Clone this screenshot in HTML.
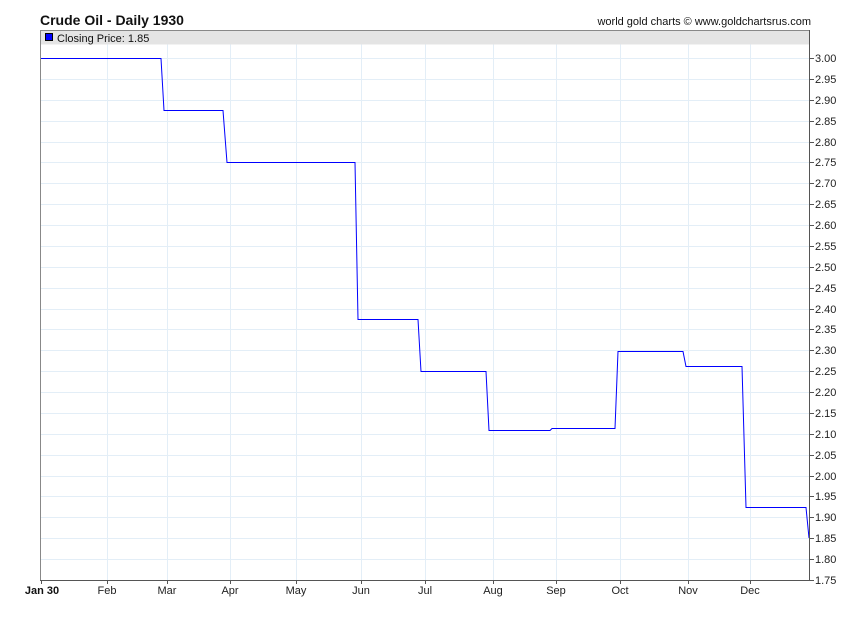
<!DOCTYPE html>
<html><head><style>
body{margin:0;background:#fff;font-family:"Liberation Sans",Arial,sans-serif;}
svg text{font-family:"Liberation Sans",Arial,sans-serif;}
</style></head><body>
<svg width="850" height="616" viewBox="0 0 850 616" xmlns="http://www.w3.org/2000/svg">
<rect width="850" height="616" fill="#fff"/>
<text x="40" y="25" font-size="14" font-weight="bold" fill="#111">Crude Oil - Daily 1930</text>
<text x="811" y="25" font-size="11" fill="#111" text-anchor="end">world gold charts © www.goldchartsrus.com</text>
<g stroke="#e3eef7" stroke-width="1">
<g id="h"></g>
</g>
<g stroke="#e3eef7" stroke-width="1" id="grid">
<line x1="40" x2="810" y1="58.5" y2="58.5"/><line x1="40" x2="810" y1="79.5" y2="79.5"/><line x1="40" x2="810" y1="100.5" y2="100.5"/><line x1="40" x2="810" y1="121.5" y2="121.5"/><line x1="40" x2="810" y1="142.5" y2="142.5"/><line x1="40" x2="810" y1="162.5" y2="162.5"/><line x1="40" x2="810" y1="183.5" y2="183.5"/><line x1="40" x2="810" y1="204.5" y2="204.5"/><line x1="40" x2="810" y1="225.5" y2="225.5"/><line x1="40" x2="810" y1="246.5" y2="246.5"/><line x1="40" x2="810" y1="267.5" y2="267.5"/><line x1="40" x2="810" y1="288.5" y2="288.5"/><line x1="40" x2="810" y1="309.5" y2="309.5"/><line x1="40" x2="810" y1="329.5" y2="329.5"/><line x1="40" x2="810" y1="350.5" y2="350.5"/><line x1="40" x2="810" y1="371.5" y2="371.5"/><line x1="40" x2="810" y1="392.5" y2="392.5"/><line x1="40" x2="810" y1="413.5" y2="413.5"/><line x1="40" x2="810" y1="434.5" y2="434.5"/><line x1="40" x2="810" y1="455.5" y2="455.5"/><line x1="40" x2="810" y1="476.5" y2="476.5"/><line x1="40" x2="810" y1="496.5" y2="496.5"/><line x1="40" x2="810" y1="517.5" y2="517.5"/><line x1="40" x2="810" y1="538.5" y2="538.5"/><line x1="40" x2="810" y1="559.5" y2="559.5"/>
<line x1="107.5" x2="107.5" y1="30" y2="580"/><line x1="167.5" x2="167.5" y1="30" y2="580"/><line x1="230.5" x2="230.5" y1="30" y2="580"/><line x1="296.5" x2="296.5" y1="30" y2="580"/><line x1="361.5" x2="361.5" y1="30" y2="580"/><line x1="425.5" x2="425.5" y1="30" y2="580"/><line x1="493.5" x2="493.5" y1="30" y2="580"/><line x1="556.5" x2="556.5" y1="30" y2="580"/><line x1="620.5" x2="620.5" y1="30" y2="580"/><line x1="688.5" x2="688.5" y1="30" y2="580"/><line x1="750.5" x2="750.5" y1="30" y2="580"/>
</g>
<rect x="40.5" y="30.5" width="769" height="14" fill="#e4e4e4"/>
<rect x="45.5" y="33.5" width="7" height="7" fill="#0000ff" stroke="#000" stroke-width="1"/>
<text x="57" y="42" font-size="11" fill="#111">Closing Price: 1.85</text>
<polyline fill="none" stroke="#0000ff" stroke-width="1" points="40,58.5 161,58.5 164,110.5 223,110.5 227,162.5 355,162.5 358,319.5 418,319.5 421,371.5 486,371.5 489,430.5 550,430.5 552,428.5 615,428.5 618,351.5 683,351.5 686,366.5 742,366.5 746,507.5 806,507.5 809,538"/>
<path d="M40.5 30.5 H809.5 V580.5 H40.5 Z" fill="none" stroke="#888" stroke-width="1"/>
<g stroke="#555" stroke-width="1">
<line x1="809.5" y1="30" x2="809.5" y2="581"/>
<line x1="40" y1="580.5" x2="810" y2="580.5"/>
</g>
<g stroke="#555" stroke-width="1" id="ticks">
<line x1="810" x2="814" y1="58.5" y2="58.5"/><line x1="810" x2="814" y1="79.5" y2="79.5"/><line x1="810" x2="814" y1="100.5" y2="100.5"/><line x1="810" x2="814" y1="121.5" y2="121.5"/><line x1="810" x2="814" y1="142.5" y2="142.5"/><line x1="810" x2="814" y1="162.5" y2="162.5"/><line x1="810" x2="814" y1="183.5" y2="183.5"/><line x1="810" x2="814" y1="204.5" y2="204.5"/><line x1="810" x2="814" y1="225.5" y2="225.5"/><line x1="810" x2="814" y1="246.5" y2="246.5"/><line x1="810" x2="814" y1="267.5" y2="267.5"/><line x1="810" x2="814" y1="288.5" y2="288.5"/><line x1="810" x2="814" y1="309.5" y2="309.5"/><line x1="810" x2="814" y1="329.5" y2="329.5"/><line x1="810" x2="814" y1="350.5" y2="350.5"/><line x1="810" x2="814" y1="371.5" y2="371.5"/><line x1="810" x2="814" y1="392.5" y2="392.5"/><line x1="810" x2="814" y1="413.5" y2="413.5"/><line x1="810" x2="814" y1="434.5" y2="434.5"/><line x1="810" x2="814" y1="455.5" y2="455.5"/><line x1="810" x2="814" y1="476.5" y2="476.5"/><line x1="810" x2="814" y1="496.5" y2="496.5"/><line x1="810" x2="814" y1="517.5" y2="517.5"/><line x1="810" x2="814" y1="538.5" y2="538.5"/><line x1="810" x2="814" y1="559.5" y2="559.5"/><line x1="810" x2="814" y1="580.5" y2="580.5"/>
<line x1="41.5" x2="41.5" y1="580" y2="584"/><line x1="107.5" x2="107.5" y1="580" y2="584"/><line x1="167.5" x2="167.5" y1="580" y2="584"/><line x1="230.5" x2="230.5" y1="580" y2="584"/><line x1="296.5" x2="296.5" y1="580" y2="584"/><line x1="361.5" x2="361.5" y1="580" y2="584"/><line x1="425.5" x2="425.5" y1="580" y2="584"/><line x1="493.5" x2="493.5" y1="580" y2="584"/><line x1="556.5" x2="556.5" y1="580" y2="584"/><line x1="620.5" x2="620.5" y1="580" y2="584"/><line x1="688.5" x2="688.5" y1="580" y2="584"/><line x1="750.5" x2="750.5" y1="580" y2="584"/>
</g>
<g font-size="11" fill="#222">
<text x="815" y="62">3.00</text><text x="815" y="83">2.95</text><text x="815" y="104">2.90</text><text x="815" y="125">2.85</text><text x="815" y="146">2.80</text><text x="815" y="166">2.75</text><text x="815" y="187">2.70</text><text x="815" y="208">2.65</text><text x="815" y="229">2.60</text><text x="815" y="250">2.55</text><text x="815" y="271">2.50</text><text x="815" y="292">2.45</text><text x="815" y="313">2.40</text><text x="815" y="333">2.35</text><text x="815" y="354">2.30</text><text x="815" y="375">2.25</text><text x="815" y="396">2.20</text><text x="815" y="417">2.15</text><text x="815" y="438">2.10</text><text x="815" y="459">2.05</text><text x="815" y="480">2.00</text><text x="815" y="500">1.95</text><text x="815" y="521">1.90</text><text x="815" y="542">1.85</text><text x="815" y="563">1.80</text><text x="815" y="584">1.75</text>
</g>
<g font-size="11" fill="#222" text-anchor="middle">
<text x="42" y="594" font-weight="bold" fill="#111">Jan 30</text>
<text x="107" y="594">Feb</text><text x="167" y="594">Mar</text><text x="230" y="594">Apr</text><text x="296" y="594">May</text><text x="361" y="594">Jun</text><text x="425" y="594">Jul</text><text x="493" y="594">Aug</text><text x="556" y="594">Sep</text><text x="620" y="594">Oct</text><text x="688" y="594">Nov</text><text x="750" y="594">Dec</text>
</g>
</svg>
</body></html>
